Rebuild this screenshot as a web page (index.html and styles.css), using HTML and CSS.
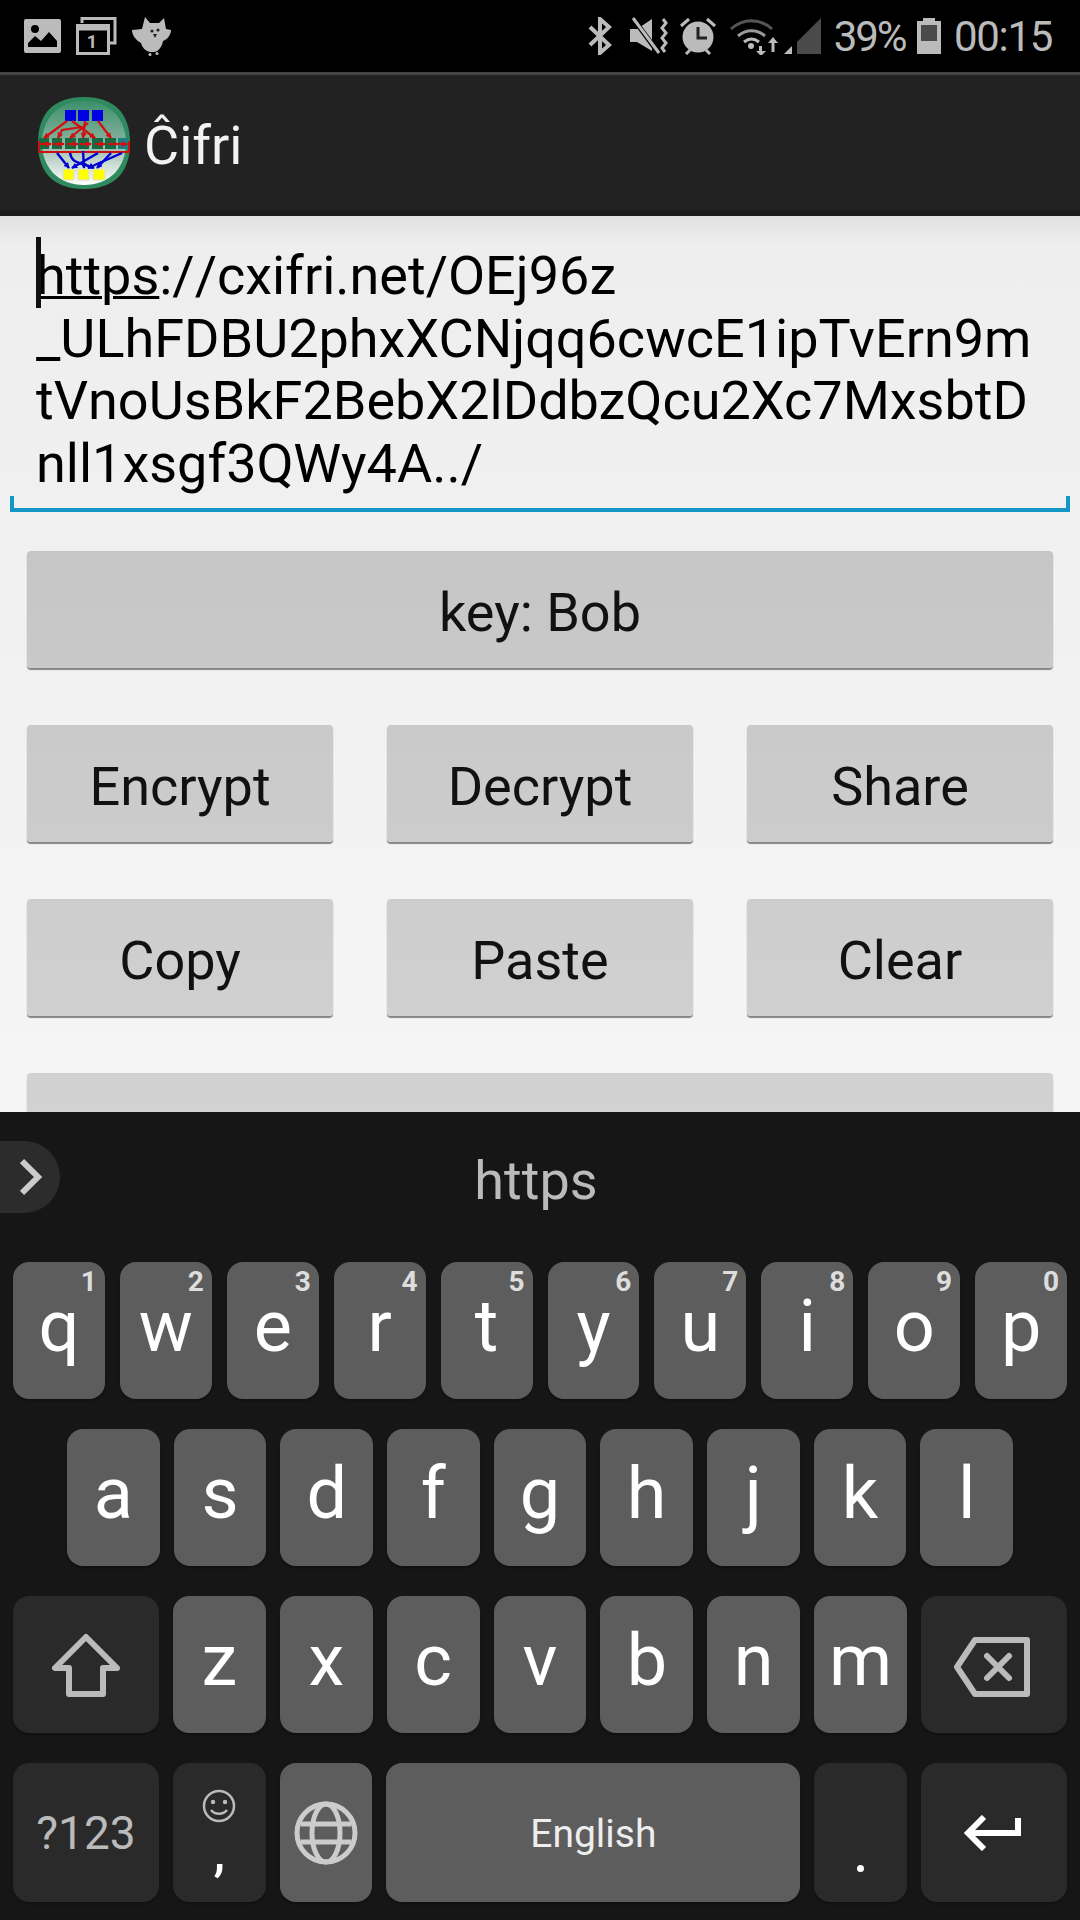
FILE: index.html
```html
<!DOCTYPE html>
<html lang="en">
  <head>
    <meta charset="UTF-8" />
    <meta name="viewport" content="width=device-width, initial-scale=1.0" />
    <title>Cifri</title>
    <link rel="stylesheet" href="styles.css">
  </head>
  <body>
    <div class="statusbar">
      <div class="status-left">
        <svg width="37" height="34" viewBox="0 0 37 34"><path fill="#bbb" fill-rule="evenodd" d="M2 0h33a2 2 0 0 1 2 2v30a2 2 0 0 1-2 2H2a2 2 0 0 1-2-2V2a2 2 0 0 1 2-2zM4 28h29V22l-8-9-8 9-6-5-7 7zM11 6a4 4 0 1 0 0 8 4 4 0 0 0 0-8z"/></svg>
        <svg width="41" height="38" viewBox="0 0 41 38"><g fill="none" stroke="#bbb" stroke-width="3"><path d="M1.500 8.500h31v28h-31z"/><path d="M1.500 11h31" stroke-width="5"/><path d="M6 6V1.500h33V26h-5"/></g><text class="cal-day" x="16" y="31" text-anchor="middle">1</text></svg>
        <svg width="39" height="39" viewBox="0 0 39 39"><path fill="#bbb" d="M13 0l5 6h9l5-5 2 11 5 1c0 6-5 10-8 11-1 6-5 11-9 11h-4c-5-1-8-5-9-9C5 24 0 19 0 13l10-1z"/><circle cx="20" cy="14" r="1.600" fill="#222"/><circle cx="26" cy="13" r="1.600" fill="#222"/><path fill="#222" d="M21 17h4l-2 4z"/><circle cx="18" cy="37.500" r="1.500" fill="#bbb"/><circle cx="25" cy="36.500" r="1.500" fill="#bbb"/></svg>
      </div>
      <div class="status-right">
        <svg class="s-bt" width="24" height="38" viewBox="0 0 24 38"><path fill="none" stroke="#bbb" stroke-width="4" d="M2 10l19 18-9 8V2l9 8L2 28"/></svg>
        <svg class="s-mute" width="38" height="38" viewBox="0 0 38 38"><path fill="#bbb" d="M0 12h7L22 2v32L7 25H0z"/><path stroke="#000" stroke-width="5" d="M2 0l28 38"/><path stroke="#bbb" stroke-width="3" d="M3 1l26 35"/><path fill="none" stroke="#bbb" stroke-width="3" d="M33 2l3 4-4 5 4 5-4 5 4 5-4 5 3 4"/></svg>
        <svg class="s-alarm" width="36" height="38" viewBox="0 0 36 38"><circle cx="18" cy="20" r="15.500" fill="#bbb"/><path stroke="#bbb" stroke-width="3" fill="none" d="M9 2L1 9M27 2l8 7M6 37l4-4M30 37l-4-4"/><path stroke="#222" stroke-width="3" fill="none" d="M18 10v11h9"/></svg>
        <svg class="s-wifi" width="50" height="38" viewBox="0 0 50 38"><g fill="none" stroke-width="3"><path stroke="#555" d="M1 12c12-11 29-11 41 0"/><path stroke="#999" d="M8 19c8-7 19-7 27 0"/><path stroke="#bbb" d="M14 25c5-4 10-4 15 0"/></g><circle cx="21" cy="29" r="3" fill="#bbb"/><path fill="#bbb" d="M29 29h3v5h4l-5 5-5-5h3zM43 20l5 6h-3.500v9h-3v-9h-3.500z"/></svg>
        <svg class="s-signal" width="37" height="36" viewBox="0 0 37 36"><path fill="#bbb" d="M8 28v8H0z"/><path fill="#4a4a4a" d="M37 0v36H13V24z"/></svg>
        <span class="s-text s-pct">39%</span>
        <svg class="s-batt" width="24" height="36" viewBox="0 0 24 36"><path fill="#bbb" d="M6 0h12v3h6v33H0V3h6z"/><path fill="#4a4a4a" d="M4 7h16v16H4z"/></svg>
        <span class="s-text">00:15</span>
      </div>
    </div>
    <div class="appbar">
      <svg class="logo" width="92" height="92" viewBox="0 0 92 92">
        <defs>
          <linearGradient id="logoFill" x1="0" y1="0" x2="0" y2="1">
            <stop offset="0" stop-color="#3d8f6b"/>
            <stop offset="0.45" stop-color="#7fb09a"/>
            <stop offset="0.7" stop-color="#c0d4cb"/>
            <stop offset="1" stop-color="#fff"/>
          </linearGradient>
          <marker id="redHead" markerUnits="userSpaceOnUse" markerWidth="6" markerHeight="6" viewBox="0 0 4 4" refX="3.500" refY="2" orient="auto"><path fill="#d01010" d="M0 0l4 2-4 2z"/></marker>
          <marker id="blueHead" markerUnits="userSpaceOnUse" markerWidth="6" markerHeight="6" viewBox="0 0 4 4" refX="3.500" refY="2" orient="auto"><path fill="#0000d0" d="M0 0l4 2-4 2z"/></marker>
        </defs>
        <path fill="#2f8a60" d="M46 0C76 0 92 16 92 46S76 92 46 92 0 76 0 46 16 0 46 0z"/>
        <path fill="url(#logoFill)" d="M46 4C71 4 88 21 88 46S71 88 46 88 4 71 4 46 21 4 46 4z"/>
        <path fill="#0000e0" d="M27 13h11v11H27zM40 13h11v11H40zM54 13h11v11H54z"/>
        <path fill="#146b42" d="M1 41h10v11H1zM14 41h10v11H14zM27 41h11v11H27zM40 41h11v11H40zM54 41h11v11H54zM67 41h11v11H67z"/>
        <path fill="#1a7f80" d="M80 41h10v11H80z"/>
        <path fill="#ffff00" stroke="#ddd" d="M25 72h11v11H25zM40 72h11v11H40zM55 72h12v11H55z"/>
        <g fill="none" stroke="#d01010" stroke-width="2.200" marker-end="url(#redHead)">
          <path d="M29 24L6 41"/>
          <path d="M34 24l23 17"/>
          <path d="M47 24l-2 17"/>
          <path d="M50 26L32 41"/>
          <path d="M60 24l13 17"/>
          <path d="M44 30l-20 3-4 8"/>
          <path d="M1 47h12"/>
          <path d="M14 47h12"/>
          <path d="M29 47h11"/>
          <path d="M42 47h11"/>
          <path d="M57 47h10"/>
          <path d="M70 47h19"/>
        </g>
        <path fill="none" stroke="#d01010" stroke-width="2" d="M1 44v11h90V44"/>
        <g fill="none" stroke="#0000d0" stroke-width="2.400" marker-end="url(#blueHead)">
          <path d="M19 56l12 15"/>
          <path d="M32 56c2 11 10 9 24 15"/>
          <path d="M60 56L34 71"/>
          <path d="M45 54l1 17"/>
          <path d="M73 56l-14 15"/>
          <path d="M84 56L50 71"/>
        </g>
      </svg>
      <span class="app-title">Ĉifri</span>
    </div>
    <div class="content">
      <div class="field">
        <div class="field-text">
          <div class="line line-first"><span class="caret"></span><u>https</u>://cxifri.net/OEj96z</div>
          <div class="line">_ULhFDBU2phxXCNjqq6cwcE1ipTvErn9m</div>
          <div class="line">tVnoUsBkF2BebX2lDdbzQcu2Xc7MxsbtD</div>
          <div class="line">nll1xsgf3QWy4A../</div>
        </div>
      </div>
      <div class="btn btn-wide">key: Bob</div>
      <div class="btn-grid">
        <div class="btn">Encrypt</div>
        <div class="btn">Decrypt</div>
        <div class="btn">Share</div>
        <div class="btn">Copy</div>
        <div class="btn">Paste</div>
        <div class="btn">Clear</div>
      </div>
      <div class="btn btn-wide"></div>
    </div>
    <div class="keyboard">
      <div class="suggest">
        <div class="suggest-toggle">
          <svg width="24" height="38" viewBox="0 0 24 38"><path fill="none" stroke="#ccc" stroke-width="6" d="M2 3l16 16L2 35"/></svg>
        </div>
        <div class="suggest-word">https</div>
      </div>
      <div class="row row-top">
        <div class="key">q<span class="hint">1</span></div>
        <div class="key">w<span class="hint">2</span></div>
        <div class="key">e<span class="hint">3</span></div>
        <div class="key">r<span class="hint">4</span></div>
        <div class="key">t<span class="hint">5</span></div>
        <div class="key">y<span class="hint">6</span></div>
        <div class="key">u<span class="hint">7</span></div>
        <div class="key">i<span class="hint">8</span></div>
        <div class="key">o<span class="hint">9</span></div>
        <div class="key">p<span class="hint">0</span></div>
      </div>
      <div class="row row-home">
        <div class="key">a</div>
        <div class="key">s</div>
        <div class="key">d</div>
        <div class="key">f</div>
        <div class="key">g</div>
        <div class="key">h</div>
        <div class="key">j</div>
        <div class="key">k</div>
        <div class="key">l</div>
      </div>
      <div class="row">
        <div class="key key-fn">
          <svg width="68" height="64" viewBox="0 0 68 64"><path fill="none" stroke="#bbb" stroke-width="6" stroke-linejoin="round" d="M34 4L3 35h14v26h34V35h14z"/></svg>
        </div>
        <div class="key">z</div>
        <div class="key">x</div>
        <div class="key">c</div>
        <div class="key">v</div>
        <div class="key">b</div>
        <div class="key">n</div>
        <div class="key">m</div>
        <div class="key key-fn">
          <svg class="icon-del" width="76" height="60" viewBox="0 0 76 60"><path fill="none" stroke="#bbb" stroke-width="6" stroke-linejoin="round" d="M3 30L21 3h52v54H21z"/><path fill="none" stroke="#bbb" stroke-width="6" stroke-linecap="round" d="M33 19l22 22M55 19L33 41"/></svg>
        </div>
      </div>
      <div class="row row-last">
        <div class="key key-fn key-label">?123</div>
        <div class="key key-dark key-comma">
          <svg width="34" height="34" viewBox="0 0 34 34"><circle cx="17" cy="17" r="15" fill="none" stroke="#bbb" stroke-width="2.500"/><circle cx="11" cy="13" r="2.200" fill="#bbb"/><circle cx="23" cy="13" r="2.200" fill="#bbb"/><path fill="none" stroke="#bbb" stroke-width="2.500" d="M9 21c4 5 12 5 16 0"/></svg>
          <span class="comma">,</span>
        </div>
        <div class="key key-globe">
          <svg width="64" height="64" viewBox="0 0 64 64"><g fill="none" stroke="#ccc" stroke-width="5"><circle cx="32" cy="32" r="29"/><ellipse cx="32" cy="32" rx="14" ry="29"/><path d="M7 23h50M7 41h50"/></g></svg>
        </div>
        <div class="key key-space">English</div>
        <div class="key key-dark key-dot"><span class="dot"></span></div>
        <div class="key key-fn">
          <svg class="icon-enter" width="58" height="36" viewBox="0 0 58 36"><path fill="none" stroke="#fff" stroke-width="6" d="M55 3v15H6M21 2L5 18l16 16"/></svg>
        </div>
      </div>
    </div>
  </body>
</html>
```

FILE: styles.css
```css
* {
  box-sizing: border-box;
}
html,
body {
  margin: 0;
  padding: 0;
}
body {
  width: 1080px;
  height: 1920px;
  overflow: hidden;
  display: flex;
  flex-direction: column;
  font-family: Roboto, "Liberation Sans", sans-serif;
  background: #f5f5f5;
}
svg {
  display: block;
  flex: none;
}

/* status bar */
.statusbar {
  height: 75px;
  flex: none;
  background: #000;
  border-bottom: 3px solid #444;
  display: flex;
  align-items: center;
  justify-content: space-between;
  padding: 0 28px 0 24px;
}
.status-left,
.status-right {
  display: flex;
  align-items: center;
}
.status-left {
  gap: 15px;
}
.cal-day {
  font-family: Roboto, sans-serif;
  font-size: 18px;
  font-weight: 700;
  fill: #bbb;
}
.s-bt {
  margin-right: 18px;
}
.s-mute {
  margin-right: 12px;
}
.s-alarm {
  margin-right: 14px;
}
.s-wifi {
  margin-right: 4px;
}
.s-signal {
  margin-right: 13px;
}
.s-batt {
  margin-right: 13px;
}
.s-text {
  color: #bbb;
  font-size: 42px;
  letter-spacing: -1.300px;
}
.s-pct {
  margin-right: 11.500px;
  letter-spacing: -2.100px;
}

/* action bar */
.appbar {
  height: 141px;
  flex: none;
  background: #222;
  border-bottom: 6px solid #1c1c1c;
  display: flex;
  align-items: center;
  padding-left: 38px;
  gap: 14px;
}
.app-title {
  color: #f2f2f2;
  font-size: 54px;
  padding-top: 6px;
}

/* content */
.content {
  flex: 1;
  min-height: 0;
  overflow: hidden;
  background: linear-gradient(#e2e2e2 0, #eeeeee 30px, #f5f5f5 100%);
  padding: 0 27px;
}
.field {
  margin: 0 -17px 39px;
  height: 296px;
  padding: 29px 26px 0;
  position: relative;
  border-bottom: 4px solid #1497c6;
}
.field::before,
.field::after {
  content: "";
  position: absolute;
  bottom: 0;
  width: 4px;
  height: 12px;
  background: #1497c6;
}
.field::before {
  left: 0;
}
.field::after {
  right: 0;
}
.field-text {
  color: #000;
  font-size: 54px;
  line-height: 62.500px;
  white-space: nowrap;
}
.line {
  position: relative;
}
.line-first {
  font-kerning: none;
}
.line u {
  text-decoration-thickness: 3px;
}
.caret {
  position: absolute;
  left: 0;
  top: -8px;
  width: 5px;
  height: 71px;
  background: #111;
}
.btn {
  height: 117px;
  padding-top: 5px;
  /* the grey lightens down the screen, across all buttons */
  background: linear-gradient(#c6c6c6 551px, #d2d2d2 1112px) fixed;
  border-radius: 4px;
  box-shadow: 0 2px 1px #858585;
  display: flex;
  align-items: center;
  justify-content: center;
  color: #111;
  font-size: 54px;
}
.btn-grid {
  display: grid;
  grid-template-columns: repeat(3, 306px);
  gap: 57px 54px;
  margin: 57px 0;
}

/* keyboard */
.keyboard {
  height: 808px;
  flex: none;
  background: #161616;
  padding: 0 13px;
}
.suggest {
  height: 150px;
  margin: 0 -13px;
  padding-top: 29px;
  position: relative;
}
.suggest-toggle {
  width: 60px;
  height: 72px;
  background: #2c2c2c;
  border-radius: 0 36px 36px 0;
  display: flex;
  align-items: center;
  padding-left: 20px;
}
.suggest-word {
  position: absolute;
  left: 0;
  right: 8px;
  top: 33px;
  line-height: 72px;
  text-align: center;
  color: #bbb;
  font-size: 54px;
}
.row {
  display: flex;
  gap: 14px;
  height: 137px;
  margin-bottom: 30px;
}
.row-top {
  gap: 15px;
}
.row-home {
  padding: 0 54px;
}
.key {
  flex: 1 1 0;
  min-width: 0;
  position: relative;
  background: #5d5d5d;
  border-radius: 16px;
  box-shadow: 0 2px 2px #111;
  display: flex;
  align-items: center;
  justify-content: center;
  color: #fff;
  font-size: 72px;
  line-height: 60px;
  padding-bottom: 8px;
}
.hint {
  position: absolute;
  top: 6px;
  right: 8px;
  color: #ddd;
  font-size: 28px;
  line-height: 28px;
  font-weight: 700;
}
.key-fn {
  flex: none;
  width: 146px;
  background: #2a2a2a;
  padding-bottom: 0;
}
.key-label {
  color: #bbb;
  font-size: 46px;
}
.key-dark {
  background: #2a2a2a;
  padding-bottom: 0;
}
.key-globe {
  padding-bottom: 0;
}
.key-comma {
  flex-direction: column;
  justify-content: flex-start;
  padding-top: 26px;
}
.comma {
  font-size: 52px;
  line-height: 60px;
  font-weight: 500;
}
.key-dot {
  align-items: flex-end;
  padding-bottom: 30px;
}
.dot {
  width: 7px;
  height: 7px;
  border-radius: 50%;
  background: #fff;
}
.key-space {
  flex: none;
  width: 414px;
  font-size: 39px;
  color: #eee;
  padding: 2px 0 0;
}
.icon-del {
  margin: 5px 4px 0 0;
}
.icon-enter {
  margin-right: 4px;
}
.row-last {
  height: 139px;
  margin-bottom: 0;
}
```
